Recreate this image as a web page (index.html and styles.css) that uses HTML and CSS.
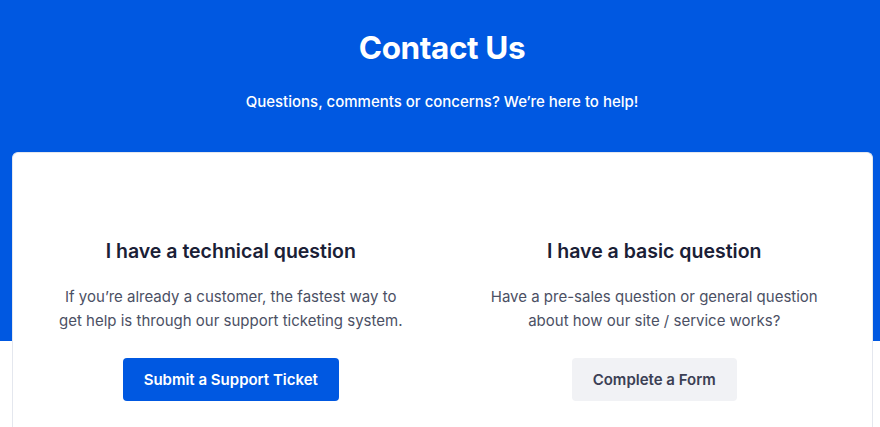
FILE: index.html
```html
<!DOCTYPE html>
<html lang="en">
<head>
<meta charset="utf-8">
<title>Contact Us</title>
<link rel="stylesheet" href="styles.css">
</head>
<body>
<div class="page">
  <header class="hero">
    <h1 class="hero-title">Contact Us</h1>
    <p class="hero-sub">Questions, comments or concerns? We’re here to help!</p>
  </header>
  <section class="card">
    <div class="col">
      <h2 class="col-title">I have a technical question</h2>
      <p class="col-text">If you’re already a customer, the fastest way to<br>get help is through our support ticketing system.</p>
      <a class="btn btn-primary" href="#">Submit a Support Ticket</a>
    </div>
    <div class="col">
      <h2 class="col-title">I have a basic question</h2>
      <p class="col-text">Have a pre-sales question or general question<br>about how our site / service works?</p>
      <a class="btn btn-secondary" href="#">Complete a Form</a>
    </div>
  </section>
</div>
</body>
</html>
```
FILE: styles.css
```css
html, body {
  margin: 0;
  padding: 0;
}
body {
  font-family: "Inter", "Noto Sans", sans-serif;
  background: linear-gradient(#0058e1 0, #0058e1 341px, #ffffff 341px);
  height: 427px;
  overflow: hidden;
}
.page {
  display: flex;
  flex-direction: column;
}
.hero {
  text-align: center;
  color: #ffffff;
  padding-top: 27px;
  padding-left: 4px;
  height: 126px;
  box-sizing: border-box;
}
.hero-title {
  margin: 0;
  font-size: 31.5px;
  font-weight: 700;
  line-height: 42px;
  letter-spacing: -0.4px;
}
.hero-sub {
  margin: 22px 0 0;
  font-size: 15px;
  font-weight: 500;
  line-height: 22px;
}
.card {
  margin: 26px 7px 0 12px;
  background: #ffffff;
  border: 1px solid #e4e7ee;
  border-bottom: none;
  border-radius: 6px 6px 0 0;
  display: grid;
  grid-template-columns: 1fr 1fr;
  padding: 84px 6px 0;
  height: 275px;
  box-sizing: border-box;
}
.col {
  display: flex;
  flex-direction: column;
  align-items: center;
  text-align: center;
}
.col-title {
  margin: 0;
  font-size: 19.5px;
  font-weight: 600;
  color: #1a2036;
  line-height: 28px;
}
.col-text {
  margin: 20px 0 0;
  font-size: 15px;
  color: #4b5064;
  line-height: 24px;
}
.btn {
  margin-top: 25px;
  height: 43px;
  box-sizing: border-box;
  display: inline-flex;
  align-items: center;
  justify-content: center;
  padding: 0 21px;
  border-radius: 4px;
  font-size: 15px;
  font-weight: 600;
  text-decoration: none;
}
.btn-primary {
  background: #0058e1;
  color: #ffffff;
}
.btn-secondary {
  background: #f1f2f5;
  color: #3b4054;
}
```
